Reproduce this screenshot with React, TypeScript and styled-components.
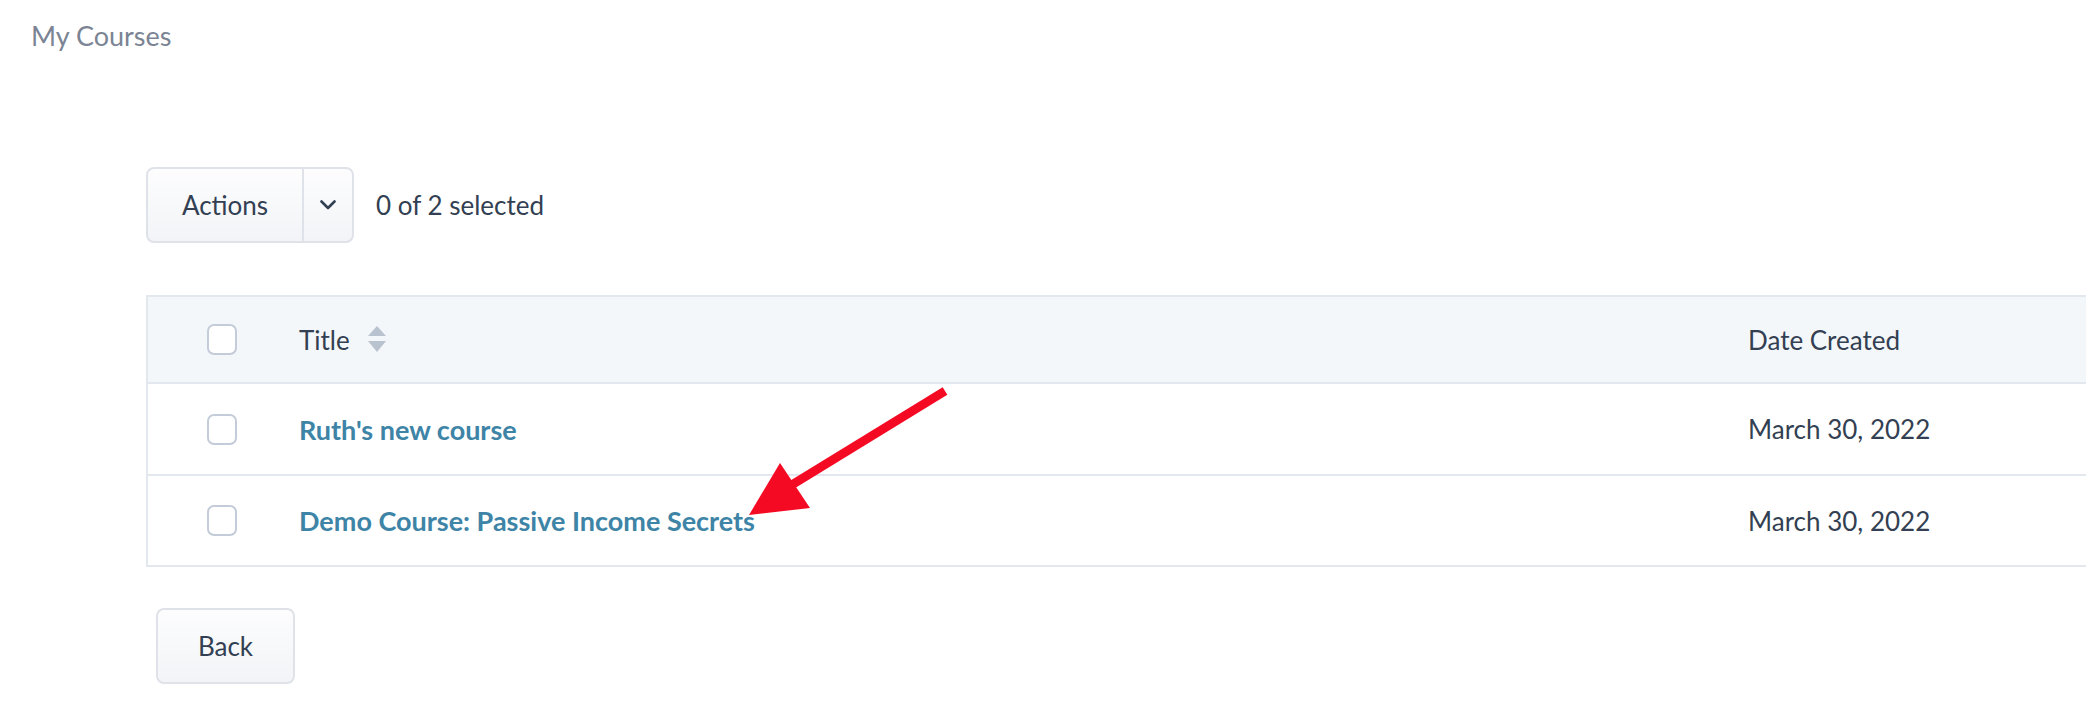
import React from 'react';
import styled, { createGlobalStyle } from 'styled-components';

const Global = createGlobalStyle`
  html, body { margin: 0; padding: 0; background: #ffffff; overflow: hidden; }
  body { font-family: Lato, "Noto Sans", sans-serif; color: #333f52; }
  * { box-sizing: border-box; }
`;

const Page = styled.div`
  position: relative;
  width: 2086px;
  height: 706px;
  overflow: hidden;
`;

const Breadcrumb = styled.div`
  margin: 18px 0 0 31px;
  font-size: 27px;
  line-height: 36px;
  color: #7b8494;
`;

const Main = styled.div`
  padding-left: 146px;
  display: flex;
  flex-direction: column;
  align-items: flex-start;
`;

const Toolbar = styled.div`
  margin-top: 113px;
  display: flex;
  align-items: center;
  gap: 22px;
`;

const ButtonGroup = styled.div`
  display: flex;
  height: 76px;
  border: 2px solid #dfe3e9;
  border-radius: 8px;
  overflow: hidden;
  background: linear-gradient(#fdfdfe, #f2f4f7);
`;

const GroupButton = styled.div<{ $w: number; $divider?: boolean }>`
  width: ${(p) => p.$w}px;
  display: flex;
  align-items: center;
  justify-content: center;
  font-size: 26px;
  color: #333f52;
  border-left: ${(p) => (p.$divider ? '2px solid #dfe3e9' : 'none')};
`;

const SelectedText = styled.span`
  font-size: 26px;
  color: #333f52;
`;

const Table = styled.div`
  margin-top: 52px;
  width: 2000px;
  border: 2px solid #e3e8ee;
`;

const Row = styled.div<{ $head?: boolean; $h: number; $last?: boolean }>`
  display: grid;
  grid-template-columns: 151px 1449px 1fr;
  align-items: center;
  height: ${(p) => p.$h}px;
  background: ${(p) => (p.$head ? '#f4f7fa' : '#ffffff')};
  border-bottom: ${(p) => (p.$last ? 'none' : '2px solid #e3e8ee')};
  font-size: 26px;
`;

const CheckCell = styled.div`
  padding-left: 59px;
  display: flex;
  align-items: center;
`;

const Checkbox = styled.span`
  width: 30px;
  height: 31px;
  border: 2px solid #c4ccd9;
  border-radius: 7px;
  background: #ffffff;
  display: block;
`;

const HeadCell = styled.div`
  display: flex;
  align-items: center;
  gap: 18px;
  color: #333f52;
`;

const LinkCell = styled.a`
  color: #3d84a6;
  font-weight: 700;
  font-size: 27px;
  text-decoration: none;
`;

const DateCell = styled.div`
  color: #333f52;
`;

const BackButton = styled.div`
  margin: 41px 0 0 10px;
  width: 139px;
  height: 76px;
  border: 2px solid #dfe3e9;
  border-radius: 8px;
  background: linear-gradient(#fdfdfe, #f2f4f7);
  display: flex;
  align-items: center;
  justify-content: center;
  font-size: 26px;
  color: #333f52;
`;

const ArrowOverlay = styled.svg`
  position: absolute;
  left: 0;
  top: 0;
  pointer-events: none;
`;

const SortIcon = () => (
  <svg width="18" height="27" viewBox="0 0 18 27">
    <polygon points="9,0 18,10 0,10" fill="#b9c2cf" />
    <polygon points="0,15 18,15 9,26" fill="#b9c2cf" />
  </svg>
);

const Chevron = () => (
  <svg width="16" height="10" viewBox="0 0 16 10">
    <polyline points="1.5,1.5 8,8 14.5,1.5" fill="none" stroke="#333f52" strokeWidth="2.6" strokeLinecap="round" strokeLinejoin="round" />
  </svg>
);

const courses = [
  { title: "Ruth's new course", date: 'March 30, 2022' },
  { title: 'Demo Course: Passive Income Secrets', date: 'March 30, 2022' },
];

export default function App() {
  return (
    <Page>
      <Global />
      <Breadcrumb>My Courses</Breadcrumb>
      <Main>
        <Toolbar>
          <ButtonGroup>
            <GroupButton $w={154}>Actions</GroupButton>
            <GroupButton $w={50} $divider>
              <Chevron />
            </GroupButton>
          </ButtonGroup>
          <SelectedText>0 of 2 selected</SelectedText>
        </Toolbar>
        <Table>
          <Row $head $h={87}>
            <CheckCell>
              <Checkbox />
            </CheckCell>
            <HeadCell>
              Title <SortIcon />
            </HeadCell>
            <HeadCell>Date Created</HeadCell>
          </Row>
          {courses.map((c, i) => (
            <Row key={c.title} $h={i === courses.length - 1 ? 89 : 92} $last={i === courses.length - 1}>
              <CheckCell>
                <Checkbox />
              </CheckCell>
              <div>
                <LinkCell href="#">{c.title}</LinkCell>
              </div>
              <DateCell>{c.date}</DateCell>
            </Row>
          ))}
        </Table>
        <BackButton>Back</BackButton>
      </Main>
      <ArrowOverlay width="2086" height="706" viewBox="0 0 2086 706">
        <line x1="945" y1="391" x2="790" y2="486" stroke="#f50a24" strokeWidth="9" />
        <polygon points="749,515 780,463 810,508" fill="#f50a24" />
      </ArrowOverlay>
    </Page>
  );
}
